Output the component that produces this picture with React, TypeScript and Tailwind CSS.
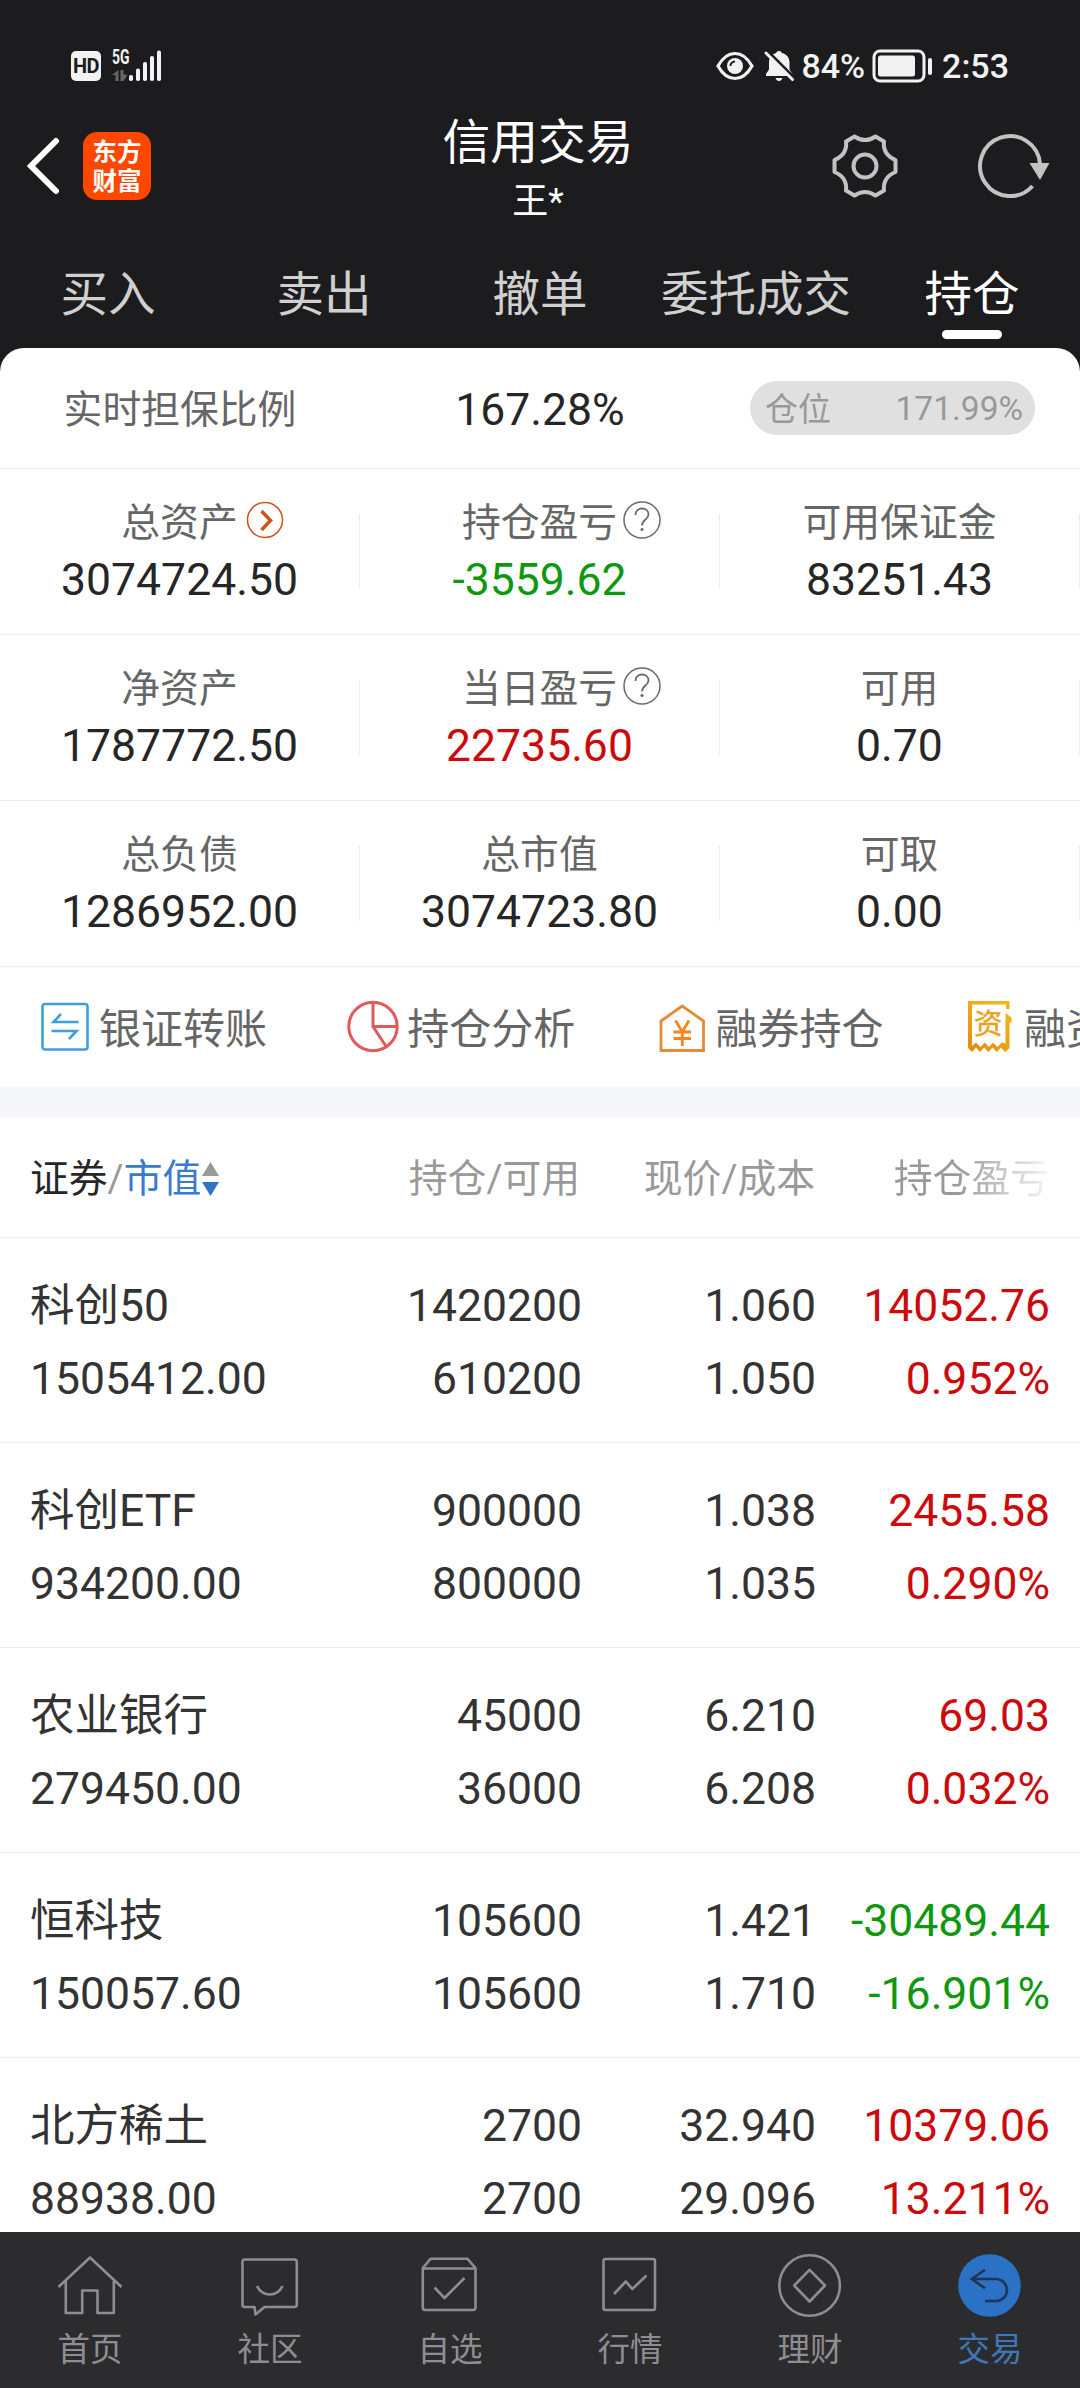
import React from "react";

type Tone = "dark" | "red" | "green";

const TONE: Record<Tone, string> = {
  dark: "text-[#262626]",
  red: "text-[#cc0a0c]",
  green: "text-[#0f980f]",
};

function StatusBar() {
  return (
    <div className="flex h-[100px] items-center justify-between pt-[32px] pr-[71px] pl-[71px] text-[#f2f2f2]">
      <div className="flex items-center">
        <div className="flex h-[30px] w-[30px] items-center justify-center rounded-[5px] bg-[#f2f2f2] text-[20px] leading-[30px] font-bold tracking-[-0.5px] text-[#1c1c1e]">
          HD
        </div>
        <svg className="ml-[10px] overflow-visible" width="52" height="32" viewBox="0 0 52 32" fill="#f2f2f2">
          <text x="1" y="14" fontSize="19.500" fontWeight="700" textLength="17.500" lengthAdjust="spacingAndGlyphs">5G</text>
          <path d="M7.500 20v11h-3v-6H1zM9.500 20h3v4.500l4 .5-4 6h-3z" fill="#666" />
          <rect x="18" y="25" width="4" height="6" rx="1.800" />
          <rect x="25" y="18.500" width="4" height="12.500" rx="1.800" />
          <rect x="32" y="12" width="4" height="19" rx="1.800" />
          <rect x="39" y="6" width="4" height="25" rx="1.800" />
          <rect x="46" y="0.500" width="4" height="30.500" rx="1.800" />
        </svg>
      </div>
      <div className="flex items-center text-[34px] leading-none font-medium">
        <svg width="38" height="30" viewBox="0 0 38 30">
          <path d="M2 15C7 6 13 2.500 19 2.500S31 6 36 15c-5 9-11 12.500-17 12.500S7 24 2 15z" fill="none" stroke="#f2f2f2" strokeWidth="3.200" />
          <circle cx="19" cy="15" r="8" fill="#f2f2f2" />
          <path d="M14.500 15a4.500 4.500 0 0 1 4.500-4.500" stroke="#1c1c1e" strokeWidth="2" fill="none" />
        </svg>
        <svg className="ml-[10px]" width="31" height="32" viewBox="0 0 31 32">
          <path d="M15 1c1.500 0 2.500.8 2.800 2 5 1.300 7.700 4.500 7.700 9.500v7l4 6.500H2v-2l3-4.500v-7c0-3 1-5.500 3-7.500 1.300-1 2.500-1.500 4.200-2C12.500 1.800 13.500 1 15 1z" fill="#f2f2f2" />
          <path d="M11.500 28h7q-1 3-3.500 3t-3.500-3z" fill="#f2f2f2" />
          <path d="M3 0.500L31.500 29" stroke="#1c1c1e" strokeWidth="3" />
          <path d="M2 3L28.500 29.500" stroke="#f2f2f2" strokeWidth="3" strokeLinecap="round" />
        </svg>
        <span className="ml-[6px]">84%</span>
        <svg className="ml-[7px]" width="62" height="34" viewBox="0 0 62 34">
          <rect x="2" y="2" width="50" height="30" rx="6" fill="none" stroke="#f2f2f2" strokeWidth="3" />
          <rect x="6" y="6.500" width="37" height="21" rx="2.500" fill="#f2f2f2" />
          <rect x="56" y="9" width="4" height="17" rx="2" fill="#f2f2f2" />
        </svg>
        <span className="ml-[8px]">2:53</span>
      </div>
    </div>
  );
}

function TitleBar() {
  return (
    <div className="flex h-[132px] items-center px-[26px]">
      <div className="flex flex-1 items-center">
        <svg width="34" height="58" viewBox="0 0 34 58">
          <path d="M30 4L5 29l25 25" fill="none" stroke="#fff" strokeWidth="6" strokeLinecap="round" />
        </svg>
        <div className="ml-[23px] flex h-[68px] w-[68px] flex-col items-center justify-center rounded-[14px] bg-[#ff4700] pt-px text-[24.500px] leading-[29px] font-bold text-white">
          <span>东方</span>
          <span>财富</span>
        </div>
      </div>
      <div className="flex flex-col items-center pt-[10px] text-white">
        <h1 className="text-[47.800px] leading-[60px]">信用交易</h1>
        <span className="pt-[2px] text-[36px] leading-[54px]">王*</span>
      </div>
      <div className="flex flex-1 items-center justify-end pr-[4px]">
        <svg width="67" height="66" viewBox="0 0 67 66" fill="none" stroke="#c2c2c2" strokeWidth="4" strokeLinejoin="round">
          <path d="M22.500 3.500Q33 10.500 43.500 3.500L52 8.500Q50.500 21.500 63.500 27V39Q50.500 44.500 52 57.500L43.500 62.500Q33 55.500 22.500 62.500L14 57.500Q15.500 44.500 2.500 39V27Q15.500 21.500 14 8.500Z" />
          <circle cx="33" cy="33" r="11.500" />
        </svg>
        <svg className="ml-[78px]" width="73" height="66" viewBox="0 0 73 66">
          <path d="M63 31A30 30 0 1 0 55.500 53" fill="none" stroke="#c2c2c2" strokeWidth="4" />
          <path d="M52.500 30h20L63 47z" fill="#c2c2c2" />
        </svg>
      </div>
    </div>
  );
}

function Tabs() {
  const tabs = ["买入", "卖出", "撤单", "委托成交", "持仓"];
  return (
    <nav className="grid h-[116px] grid-cols-5 pt-[33px] text-[47.500px] leading-[60px]">
      {tabs.map((tab) => {
        const active = tab === "持仓";
        return (
          <div key={tab} className={`flex flex-col items-center whitespace-nowrap ${active ? "text-white" : "text-[#d0d0d0]"}`}>
            {tab}
            {active && <span className="mt-[5px] h-[9px] w-[60px] rounded-full bg-white" />}
          </div>
        );
      })}
    </nav>
  );
}

function ArrowBadge() {
  return (
    <svg className="absolute top-[2px] left-full ml-[8px]" width="38" height="38" viewBox="0 0 38 38" fill="none" stroke="#c9561c">
      <circle cx="19" cy="19" r="17.500" strokeWidth="1.500" />
      <path d="M15.500 10l9 9.500-9 9.500" strokeWidth="3.500" />
    </svg>
  );
}

function HelpBadge() {
  return (
    <svg className="absolute top-[2px] left-full ml-[6px]" width="38" height="38" viewBox="0 0 38 38" fill="none" stroke="#6b6b6b">
      <circle cx="19" cy="19" r="18" strokeWidth="1.500" />
      <path d="M12.500 14c0-4 2.800-6.500 6.500-6.500s6.500 2.400 6.500 6c0 5-6.500 5-6.500 11" strokeWidth="1.800" />
      <circle cx="19" cy="28.500" r="1.200" fill="#6b6b6b" strokeWidth="0.800" />
    </svg>
  );
}

interface Stat {
  label: string;
  value: string;
  tone?: Tone;
  badge?: "arrow" | "help";
}

const STATS: Stat[][] = [
  [
    { label: "总资产", value: "3074724.50", badge: "arrow" },
    { label: "持仓盈亏", value: "-3559.62", tone: "green", badge: "help" },
    { label: "可用保证金", value: "83251.43" },
  ],
  [
    { label: "净资产", value: "1787772.50" },
    { label: "当日盈亏", value: "22735.60", tone: "red", badge: "help" },
    { label: "可用", value: "0.70" },
  ],
  [
    { label: "总负债", value: "1286952.00" },
    { label: "总市值", value: "3074723.80" },
    { label: "可取", value: "0.00" },
  ],
];

function Summary() {
  return (
    <section className="rounded-t-[24px] bg-white">
      <div className="grid h-[121px] grid-cols-3 items-center border-b border-[#ececec]">
        <span className="pt-[4px] text-center text-[38.800px] leading-[48px] text-[#666]">实时担保比例</span>
        <span className="pt-[3px] text-center text-[44.500px] leading-[54px] text-[#262626]">167.28%</span>
        <div className="mr-[45px] flex h-[54px] w-[285px] items-center justify-between justify-self-end rounded-full bg-[#e0e0e0] pt-[2px] pr-[12px] pl-[15px] text-[33.500px] text-[#999]">
          <span className="pt-px text-[33px]">仓位</span>
          <span>171.99%</span>
        </div>
      </div>
      {STATS.map((row, i) => (
        <div key={i} className="grid h-[166px] grid-cols-3 items-center border-b border-[#ececec]">
          {row.map((s) => (
            <div key={s.label} className="flex h-[75px] flex-col items-center justify-center border-r border-[#ececec] pt-[3px]">
              <span className="relative text-[38.800px] leading-[48px] text-[#666]">
                {s.label}
                {s.badge === "arrow" && <ArrowBadge />}
                {s.badge === "help" && <HelpBadge />}
              </span>
              <span className={`mt-[6px] text-[44.500px] leading-[54px] ${TONE[s.tone ?? "dark"]}`}>{s.value}</span>
            </div>
          ))}
        </div>
      ))}
    </section>
  );
}

function TransferIcon() {
  return (
    <svg width="54" height="54" viewBox="0 0 54 54" fill="none" stroke="#3d9fe2" strokeWidth="2.600">
      <rect x="4.500" y="4" width="45" height="45.500" rx="2.500" />
      <path d="M40.500 22H15.500L23 14M13.500 31H38.500L31 39" />
    </svg>
  );
}

function PieIcon() {
  return (
    <svg width="54" height="54" viewBox="0 0 54 54" fill="none" stroke="#e05a5c" strokeWidth="3">
      <circle cx="27" cy="26.500" r="24.200" />
      <path d="M27 2v24.500h24.500M27 26.500L40.500 47" />
    </svg>
  );
}

function HouseYenIcon() {
  return (
    <svg width="54" height="54" viewBox="0 0 54 54" fill="none" stroke="#e58a35" strokeWidth="2.800">
      <path d="M6 21L27.200 6 48.500 21V50.500H6z" />
      <path d="M20.500 20.500L27.300 32l6.700-11.500M27.300 32v14M18.500 32h17.500M18.500 38.500h17.500" stroke="#f5851f" />
    </svg>
  );
}

function ReceiptIcon() {
  return (
    <svg width="54" height="54" viewBox="0 0 54 54" fill="none">
      <defs>
        <linearGradient id="receipt" x1="0" y1="1" x2="0.600" y2="0">
          <stop offset="0" stopColor="#e8890c" />
          <stop offset="1" stopColor="#eeb71c" />
        </linearGradient>
      </defs>
      <path
        d="M46.500 9V1H5V48l4 4 4-4.500 4 4.500 4.200-4.500 4.200 4.500 4.200-4.500 4.200 4.500 4.200-4.500 4.200 4.500 4.300-4V22l2 1V17.500L42.500 13V43.500L38.500 42.500 34.500 47 30 42.500 26 47 21.800 42.500 17.600 47 13 42.500 9 46V4.500H43V9z"
        fill="url(#receipt)"
      />
      <text x="25.300" y="34" fontSize="28.500" textAnchor="middle" fill="#e9a115" stroke="#e9a115" strokeWidth="0.400">资</text>
    </svg>
  );
}

function QuickActions() {
  const actions = [
    { label: "银证转账", icon: <TransferIcon /> },
    { label: "持仓分析", icon: <PieIcon /> },
    { label: "融券持仓", icon: <HouseYenIcon /> },
    { label: "融资持仓", icon: <ReceiptIcon /> },
  ];
  return (
    <section className="flex h-[120px] items-center overflow-hidden bg-white pl-[38px]">
      {actions.map((a) => (
        <div key={a.label} className="flex w-[308.300px] shrink-0 items-center gap-[7px] text-[42px] leading-[52px] whitespace-nowrap text-[#666]">
          {a.icon}
          <span className="pt-[5px]">{a.label}</span>
        </div>
      ))}
    </section>
  );
}

interface Holding {
  name: string;
  value: string;
  amount: string;
  available: string;
  price: string;
  cost: string;
  profit: string;
  rate: string;
  tone: Tone;
}

const HOLDINGS: Holding[] = [
  { name: "科创50", value: "1505412.00", amount: "1420200", available: "610200", price: "1.060", cost: "1.050", profit: "14052.76", rate: "0.952%", tone: "red" },
  { name: "科创ETF", value: "934200.00", amount: "900000", available: "800000", price: "1.038", cost: "1.035", profit: "2455.58", rate: "0.290%", tone: "red" },
  { name: "农业银行", value: "279450.00", amount: "45000", available: "36000", price: "6.210", cost: "6.208", profit: "69.03", rate: "0.032%", tone: "red" },
  { name: "恒科技", value: "150057.60", amount: "105600", available: "105600", price: "1.421", cost: "1.710", profit: "-30489.44", rate: "-16.901%", tone: "green" },
  { name: "北方稀土", value: "88938.00", amount: "2700", available: "2700", price: "32.940", cost: "29.096", profit: "10379.06", rate: "13.211%", tone: "red" },
];

function Cell({ top, bottom, className }: { top: string; bottom: string; className: string }) {
  return (
    <div className={`flex flex-col ${className}`}>
      <span>{top}</span>
      <span>{bottom}</span>
    </div>
  );
}

function Holdings() {
  return (
    <section className="min-h-0 flex-1 overflow-hidden bg-white">
      <div className="grid h-[121px] grid-cols-[300px_250px_235px_234px] items-center border-b border-[#ececec] pt-[4px] pl-[30px] text-[38.800px] leading-[48px] text-[#999]">
        <div className="flex items-center">
          <span className="text-[#262626]">证券</span>
          <span>/</span>
          <span className="text-[#3a7bd0]">市值</span>
          <svg className="ml-px" width="17" height="34" viewBox="0 0 17 34">
            <path d="M8.500 0L17 14H0z" fill="#999" />
            <path d="M8.500 34L17 20H0z" fill="#2f74c4" />
          </svg>
        </div>
        <span className="text-right">持仓/可用</span>
        <span className="text-right">现价/成本</span>
        <span className="bg-gradient-to-r from-[#999] from-[60%] to-[#f6f6f6] bg-clip-text text-right text-transparent">持仓盈亏</span>
      </div>
      {HOLDINGS.map((h) => (
        <div key={h.name} className="grid h-[205px] grid-cols-[300px_252px_234px_234px] border-b border-[#ececec] pt-[32px] pl-[30px] text-[44.500px] leading-[73px] text-[#333]">
          <Cell top={h.name} bottom={h.value} className="" />
          <Cell top={h.amount} bottom={h.available} className="items-end" />
          <Cell top={h.price} bottom={h.cost} className="items-end" />
          <Cell top={h.profit} bottom={h.rate} className={`items-end ${TONE[h.tone]}`} />
        </div>
      ))}
    </section>
  );
}

const NAV_ITEMS = [
  {
    label: "首页",
    icon: <path d="M1.500 34L33 4.500 64.500 34M8.800 28V60H25.200V37.500H40.500V60H56.800V28" />,
  },
  {
    label: "社区",
    icon: (
      <>
        <path d="M7.500 6.500H57.500Q59.800 6.500 59.800 9V51.500Q59.800 54 57.500 54H27.500L18.500 61.500 17.500 54H7.500Q5.500 54 5.500 51.500V9Q5.500 6.500 7.500 6.500z" />
        <path d="M20 33Q24 41.500 32.800 41.500T45.500 33" />
      </>
    ),
  },
  {
    label: "自选",
    icon: (
      <>
        <path d="M5.800 15L13.500 5.800H50.500L58.500 15V54.500Q58.500 57 56 57H8.500Q5.800 57 5.800 54.500zM5.800 15.500H58.500" />
        <path d="M17.500 34.500L27.500 45 47.500 25" />
      </>
    ),
  },
  {
    label: "行情",
    icon: (
      <>
        <rect x="6.500" y="6" width="51.500" height="51" rx="2" />
        <path d="M17 41L28.800 28.500 35.300 36 49.500 22.500" />
      </>
    ),
  },
  {
    label: "理财",
    icon: (
      <>
        <circle cx="32.600" cy="32.500" r="30.300" />
        <path d="M32.600 16.800L48 32.500 32.600 48.500 17.200 32.500z" />
      </>
    ),
  },
];

function BottomNav() {
  return (
    <nav className="grid h-[156px] grid-cols-6 bg-[#2c2c2e] pt-[21px] text-[32.500px] leading-[40px] text-[#8e8e92]">
      {NAV_ITEMS.map((item) => (
        <div key={item.label} className="flex flex-col items-center gap-[11px]">
          <svg width="66" height="66" viewBox="0 0 66 66" fill="none" stroke="#8e8e92" strokeWidth="2.600" strokeLinejoin="round">
            {item.icon}
          </svg>
          <span>{item.label}</span>
        </div>
      ))}
      <div className="flex flex-col items-center gap-[11px] text-[#3f78b8]">
        <svg width="66" height="66" viewBox="0 0 66 66" fill="none">
          <circle cx="32.500" cy="32.500" r="31.300" fill="#2b72c6" />
          <path d="M28 16.800L14.800 26 28 35.300M14.800 26H39A11 11 0 0 1 39 48H28" stroke="#1e3654" strokeWidth="2.600" />
        </svg>
        <span>交易</span>
      </div>
    </nav>
  );
}

export default function App() {
  return (
    <div className="flex h-[2388px] w-[1080px] flex-col overflow-hidden bg-[#1c1c1e] font-['Roboto','Noto_Sans_CJK_SC',sans-serif]">
      <header className="h-[348px] shrink-0">
        <StatusBar />
        <TitleBar />
        <Tabs />
      </header>
      <Summary />
      <QuickActions />
      <div className="h-[30px] shrink-0 bg-[#f6f7fa]" />
      <Holdings />
      <BottomNav />
    </div>
  );
}
